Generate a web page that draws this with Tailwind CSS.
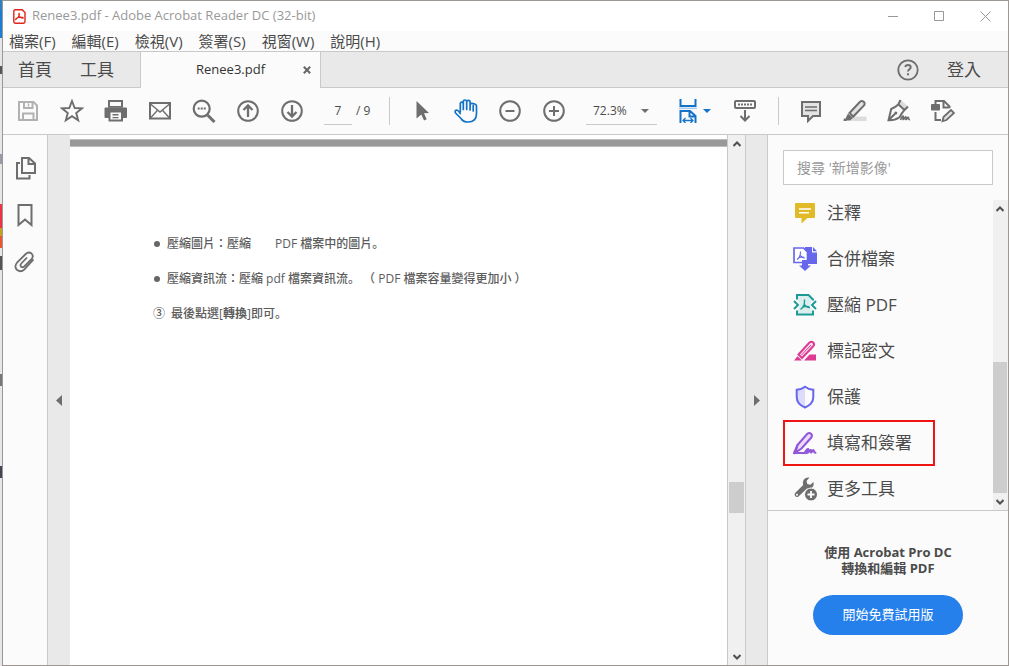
<!DOCTYPE html>
<html lang="zh-Hant">
<head>
<meta charset="utf-8">
<title>Renee3.pdf - Adobe Acrobat Reader DC (32-bit)</title>
<script src="https://cdn.jsdelivr.net/npm/@tailwindcss/browser@4"></script>
</head>
<body class="flex h-screen overflow-hidden bg-[#e6e6e6] font-['Open_Sans','Noto_Sans_CJK_TC',sans-serif] text-[#4b4b4b]">

<!-- desktop showing behind the window -->
<div class="flex w-0.5 shrink-0 flex-col" aria-hidden="true">
  <div class="h-2.5 bg-[#2f7fc4]"></div><div class="h-7 bg-[#1a7fd4]"></div>
  <div class="mt-7 h-2 bg-[#555]"></div>
  <div class="mt-20 h-2.5 bg-[#99a]"></div>
  <div class="mt-10 h-6 bg-[#ee3344]"></div><div class="h-2 bg-[#c8a020]"></div><div class="h-3 bg-[#ee5533]"></div>
  <div class="mt-2 h-3.5 bg-[#555]"></div>
  <div class="mt-26 h-3 bg-[#777]"></div>
  <div class="mt-20 h-3 bg-[#445]"></div>
</div>

<div class="flex min-w-0 flex-1 flex-col border border-[#9d9893] bg-[#fbfbfb]">

  <header>
    <div class="flex h-[30px] items-center bg-white pl-[9px]">
      <svg class="mr-[5px] size-[15px]" viewBox="0 0 15 15" fill="none" stroke="#e1251b"><path d="M3.2.8h7L13 3.6v9.2q0 1.4-1.4 1.4H3.2q-1.4 0-1.4-1.4V2.2Q1.800.8 3.2.8z" stroke-width="1.4"/><path d="M6.900 4.300c1.200 0 0 4-3.100 6.300-.7.500-.2-1.600 3-2.200 3.200-.6 5.200.2 4.200.8-1.200.6-5.100-2.500-4.100-4.900z" stroke-width="1.100"/></svg>
      <h1 class="flex-1 text-[13px] text-[#999]">Renee3.pdf - Adobe Acrobat Reader DC (32-bit)</h1>
      <button aria-label="最小化" class="flex h-full w-[45px] items-center justify-center"><svg class="size-[11px]" viewBox="0 0 11 11" stroke="#999"><path d="M0 5.500h10"/></svg></button>
      <button aria-label="最大化" class="flex h-full w-[46px] items-center justify-center"><svg class="size-[11px]" viewBox="0 0 11 11" fill="none" stroke="#999"><path d="M.5.5h9v9h-9z"/></svg></button>
      <button aria-label="關閉" class="flex h-full w-[46px] items-center justify-center"><svg class="size-[11px]" viewBox="0 0 11 11" stroke="#999"><path d="M.5.5l10 10M10.500.5l-10 10"/></svg></button>
    </div>
    <nav class="flex h-[21px] items-center gap-4 border-b border-[#c9c9c9] pl-1.5 text-[15px] leading-5 whitespace-nowrap">
      <button>檔案(F)</button><button>編輯(E)</button><button>檢視(V)</button><button>簽署(S)</button><button>視窗(W)</button><button>說明(H)</button>
    </nav>
    <div class="flex h-9 text-[17px]">
      <div class="flex w-[138px] gap-7 border-r border-b border-[#c9c9c9] bg-[#e9e9e9] pl-[15px]">
        <button>首頁</button><button>工具</button>
      </div>
      <div class="flex w-[179px] items-center pl-[55px] text-[13px] text-[#333]">
        <span class="flex-1">Renee3.pdf</span>
        <button aria-label="關閉分頁" class="mr-2 flex size-[11px] items-center justify-center"><svg class="size-2" viewBox="0 0 8 8" stroke="#666" stroke-width="2"><path d="M.8.8l6.400 6.400M7.200.8L.8 7.200"/></svg></button>
      </div>
      <div class="flex flex-1 items-center justify-end gap-7 border-b border-l border-[#c9c9c9] bg-[#e9e9e9] pr-[27px]">
        <button aria-label="說明"><svg class="size-[22px]" viewBox="0 0 22 22" fill="none" stroke="#6e6e6e" stroke-width="2"><circle cx="11" cy="11" r="9.700" stroke-width="1.800"/><path d="M8.300 8q.4-2 2.700-2 2.700 0 2.700 2.300c0 2-2.700 1.900-2.700 4.200M11 14.300v2"/></svg></button>
        <button>登入</button>
      </div>
    </div>

    <div class="flex h-[47px] items-center border-b border-[#c9c9c9] pl-[3px] text-xs">
      <button aria-label="儲存" class="flex w-11 justify-center"><svg class="size-6" viewBox="0 0 24 24" fill="none" stroke="#b1b1b1" stroke-width="2"><path d="M3 3h14.500L21 6.500V21H3z"/><path d="M8 3v6h8.500V3M7 21v-6.500h10.500V21"/><path d="M12.500 4.500v3" stroke-width="1.500"/></svg></button>
      <button aria-label="加星號" class="flex w-11 justify-center"><svg class="size-6" viewBox="0 0 24 24" fill="none" stroke="#6e6e6e" stroke-width="1.900"><path d="M12 2l2.700 7 7.300.300-5.800 4.700 2 7.300L12 17.200l-6.200 4.100 2-7.300L2 9.300 9.300 9z"/></svg></button>
      <button aria-label="列印" class="flex w-11 justify-center"><svg class="size-6" viewBox="0 0 24 24" fill="#6e6e6e"><path d="M4 1h15v6H4zM1.500 8.500h20.500q1 0 1 1V18q0 1-1 1h-3v3.500H4.500V19H1.500q-1 0-1-1V9.500q0-1 1-1z"/><path fill="#fbfbfb" d="M6 3h11v4H6zM6.500 13.500h10.500v7H6.500z"/><path d="M8.500 15h6v1.500h-6zM8.500 18h6v1.300h-6zM4 7h15v1.800H4z"/></svg></button>
      <button aria-label="電子郵件" class="flex w-11 justify-center"><svg class="size-6" viewBox="0 0 24 24" fill="none" stroke="#6e6e6e"><path d="M2 4h20v15.500H2z" stroke-width="2"/><path d="M2.500 5l9.500 8 9.500-8M2.500 19l7-7.800M21.500 19l-7-7.800" stroke-width="1.400"/></svg></button>
      <button aria-label="尋找" class="flex w-11 justify-center"><svg class="size-6" viewBox="0 0 24 24" fill="none" stroke="#6e6e6e"><circle cx="9.700" cy="9.700" r="8" stroke-width="2.200"/><path d="M15.500 16l7 7" stroke-width="3"/><path d="M5.700 9.500h8" stroke-width="2" stroke-dasharray="2 1"/></svg></button>
      <button aria-label="上一頁" class="flex w-11 justify-center"><svg class="size-6" viewBox="0 0 24 24" fill="none" stroke="#6e6e6e" stroke-width="2"><circle cx="12" cy="12" r="9.800"/><path d="M12 18V7M7.500 11L12 6.500l4.500 4.500" stroke-width="2.300"/></svg></button>
      <button aria-label="下一頁" class="flex w-11 justify-center"><svg class="size-6" viewBox="0 0 24 24" fill="none" stroke="#6e6e6e" stroke-width="2"><circle cx="12" cy="12" r="9.800"/><path d="M12 6v11M7.500 13l4.500 4.500 4.500-4.500" stroke-width="2.300"/></svg></button>
      <input aria-label="頁碼" value="7" class="ml-2.5 h-7 w-7 border-b border-[#c9c9c9] text-center">
      <span class="ml-1 w-[33px]">/ 9</span>
      <span class="mr-2.5 h-7 w-px bg-[#c9c9c9]"></span>
      <button aria-label="選取" class="flex w-11 justify-center"><svg class="size-6" viewBox="0 0 24 24" fill="#6e6e6e"><path d="M6.500 2l12.500 12-5 .3 2.700 6-2.700 1.200-2.700-6-4.800 4z"/></svg></button>
      <button aria-label="手形工具" class="flex w-11 justify-center"><svg class="size-6" viewBox="0 0 24 24" fill="none" stroke="#1473c8" stroke-width="1.700" stroke-linecap="round" stroke-linejoin="round"><path d="M6.300 12.500V4.700q0-1.600 1.500-1.600t1.500 1.600V10.500 2.700q0-1.700 1.700-1.700t1.700 1.700V10.500 3.100q0-1.700 1.700-1.700T16.100 3.100V11 5.700q0-1.600 3-1.200 3.400.6 3.400 2.500V14.500q0 8.500-8.500 8.500-5 0-7-3.500L1.500 14Q.4 11.300 2.500 11q1.700 0 3.800 3.500"/><path d="M19.200 6V12"/></svg></button>
      <button aria-label="縮小" class="flex w-11 justify-center"><svg class="size-6" viewBox="0 0 24 24" fill="none" stroke="#6e6e6e" stroke-width="2"><circle cx="12" cy="12" r="9.800"/><path d="M7.500 12h9"/></svg></button>
      <button aria-label="放大" class="flex w-11 justify-center"><svg class="size-6" viewBox="0 0 24 24" fill="none" stroke="#6e6e6e" stroke-width="2"><circle cx="12" cy="12" r="9.800"/><path d="M7 12h10M12 7v10"/></svg></button>
      <div class="relative ml-2.5 w-[71px]">
        <select aria-label="縮放比例" class="h-7 w-full appearance-none border-b border-[#c9c9c9] pl-[7px]"><option>72.3%</option></select>
        <svg class="pointer-events-none absolute top-3 right-2 h-1 w-2" viewBox="0 0 8 4" fill="#6e6e6e"><path d="M0 0h8L4 4z"/></svg>
      </div>
      <button aria-label="符合寬度" class="ml-[22px] flex items-center gap-1.5"><svg class="h-6 w-[18px]" viewBox="0 0 18 24" fill="none" stroke="#1473c8" stroke-width="2"><path d="M1.500 0v7h15V0"/><path d="M0 9.300h18" stroke="#a9cdf0" stroke-width="1.500"/><path d="M1.500 24V12h9.500l5.500 5v7M10.500 12v5.500h6"/><path d="M4 21.500h10M6.500 19L4 21.500 6.500 24M11.500 19l2.500 2.500-2.500 2.500" stroke-width="1.300"/></svg><svg class="h-1 w-2" viewBox="0 0 8 4" fill="#1473c8"><path d="M0 0h8L4 4z"/></svg></button>
      <button aria-label="隱藏工具列" class="ml-3 flex w-11 justify-center"><svg class="size-6" viewBox="0 0 24 24" fill="none" stroke="#6e6e6e" stroke-width="2"><rect x="2" y="2" width="20" height="7" rx="1"/><path d="M5 5.500h14" stroke-dasharray="2 1"/><path d="M12 11v10M7.500 17l4.500 4.500 4.500-4.500"/></svg></button>
      <span class="mr-2.5 ml-[11px] h-7 w-px bg-[#c9c9c9]"></span>
      <button aria-label="註解" class="flex w-11 justify-center"><svg class="size-6" viewBox="0 0 24 24" fill="#e3e3e3" stroke="#6e6e6e" stroke-width="2"><path d="M3 3h18v14h-7l-5 5v-5H3z"/><path d="M6 8h12M6 11.500h12" stroke-width="1.400"/></svg></button>
      <button aria-label="螢光標示" class="flex w-11 justify-center"><svg class="size-6" viewBox="0 0 24 24" fill="none" stroke="#6e6e6e" stroke-width="2"><path d="M7 17.500h16.500v4.500H7z" fill="#dcdcdc" stroke="none"/><path d="M6.500 14L17 2.800q1.800-1.600 3.700 0 1.700 1.700.3 3.600L10.300 17.500z" fill="#e3e3e3"/><path d="M5 14.500l5 4.300-3 2.700H1.500z" fill="#6e6e6e" stroke="none"/><path d="M1 19l3 3H.5z" fill="#6e6e6e" stroke="none"/></svg></button>
      <button aria-label="簽署" class="flex w-11 justify-center"><svg class="size-6" viewBox="0 0 24 24" fill="none" stroke="#6e6e6e" stroke-width="2"><path d="M14 1l7 6.500-3.500 2.500-5.500-5z" fill="#dcdcdc" stroke="none"/><path d="M13.500 1L11.300 5.500Q8 8.500 4.200 10L1.500 21.300Q8 21.500 12.500 18.300 14.500 14.500 17.300 11.200L21 7.500M1.500 21.300l6.500-6.500M11 5l7 6.500"/><circle cx="8.800" cy="14" r="1.500" fill="#6e6e6e" stroke="none"/><path d="M13.500 21q2.200-5 2.800-3.700c.4 1-1 3.500.2 3.200s1.600-3 2.400-2.600-.7 3 .3 2.600 1.500-2.700 2.100-2.200-.4 2.500 1.700 2.500" stroke-width="1.600"/></svg></button>
      <button aria-label="編輯 PDF" class="flex w-11 justify-center"><svg class="size-6" viewBox="0 0 24 24" fill="none" stroke="#6e6e6e" stroke-width="2"><path d="M4.500 5V2H13l5.500 5.500V9M12.500 2v6.500h6M4.500 13v8h5.500"/><rect x="0" y="5" width="9" height="6.500" rx="1" fill="#6e6e6e" stroke="none"/><path d="M12.500 18l7.500-7 3 3-7.500 7-4 1.200z" fill="#e3e3e3" stroke-width="1.800"/></svg></button>
    </div>
  </header>

  <div class="flex min-h-0 flex-1">
    <aside class="flex w-[45px] flex-col items-center gap-[23px] border-r border-[#c9c9c9] pt-[21px]">
      <button aria-label="頁面縮圖"><svg class="size-6" viewBox="0 0 24 24" fill="none" stroke="#6e6e6e" stroke-width="2"><path d="M9 2h7l6 5.500V17H9zM15.500 2v6H22"/><path d="M7 7H4v15.500h12.500V19"/></svg></button>
      <button aria-label="書籤"><svg class="size-6" viewBox="0 0 24 24" fill="none" stroke="#6e6e6e" stroke-width="2"><path d="M5.500 2h13v20L12 16.500 5.500 22z"/></svg></button>
      <button aria-label="附件"><svg class="size-6" viewBox="0 0 24 24" fill="none" stroke="#6e6e6e" stroke-width="1.800"><path d="M20.500 9.500l-9 9.800q-3.800 3.500-7.300.7-3.500-3.300-.2-7.300L12.700 4q3-2.700 5.800-.5 2.600 2.800 0 5.700l-7.200 7.300q-1.800 1.400-3.200.2-1.300-1.500.2-3.200L14 7.500"/></svg></button>
    </aside>
    <button aria-label="收合左側窗格" class="flex w-[22px] items-center justify-center bg-[#e9e9e9]"><svg class="h-[11px] w-1.5" viewBox="0 0 6 11" fill="#6e6e6e"><path d="M6 0v11L0 5.500z"/></svg></button>

    <main class="min-w-0 flex-1 bg-white pt-1 text-xs text-[#5c5c5c]">
      <div class="h-2 border-t border-b border-[#bdbdbd] bg-[#999]"></div>
      <div class="flex flex-col gap-[15px] pt-[87px] pl-[84px] font-medium whitespace-pre [text-spacing-trim:space-all]">
        <p class="flex h-5 items-center gap-[7px]"><span class="size-1.5 rounded-full bg-[#666]"></span><span>壓縮圖片：壓縮　　PDF 檔案中的圖片<span lang="ja">。</span></span></p>
        <p class="flex h-5 items-center gap-[7px]"><span class="size-1.5 rounded-full bg-[#666]"></span><span>壓縮資訊流：壓縮 pdf 檔案資訊流<span lang="ja">。</span> （ PDF 檔案容量變得更加小 ）</span></p>
        <p class="-ml-px flex h-5 items-center gap-1.5"><span>③</span><span>最後點選[<b>轉換</b>]即可<span lang="ja">。</span></span></p>
      </div>
    </main>

    <div class="flex w-[19px] flex-col items-center border-x border-[#c9c9c9] bg-[#f0f0f0]">
      <button aria-label="向上捲動" class="flex h-[17px] items-center"><svg class="h-1.5 w-2" viewBox="0 0 8 6" fill="none" stroke="#505050" stroke-width="2"><path d="M.5 5L4 1.500 7.500 5"/></svg></button>
      <div class="flex w-[15px] flex-1 flex-col pb-[135px]"><div class="mt-auto h-[31px] bg-[#cdcdcd]"></div></div>
      <button aria-label="向下捲動" class="flex h-[17px] items-center"><svg class="h-1.5 w-2" viewBox="0 0 8 6" fill="none" stroke="#505050" stroke-width="2"><path d="M.5 1L4 4.500 7.500 1"/></svg></button>
    </div>
    <button aria-label="收合右側窗格" class="flex w-[22px] items-center justify-center border-r border-[#c9c9c9] bg-[#e9e9e9]"><svg class="h-[11px] w-1.5" viewBox="0 0 6 11" fill="#6e6e6e"><path d="M0 0v11l6-5.500z"/></svg></button>

    <aside class="flex w-60 flex-col">
      <div class="flex border-b border-[#c9c9c9]">
        <div class="flex-1 pt-[15px] pb-px pl-[15px]">
          <input type="search" aria-label="搜尋工具" placeholder="搜尋 '新增影像'" class="h-[35px] w-[210px] border border-[#c9c9c9] bg-white px-[13px] text-sm placeholder:text-[#999]">
          <ul class="mt-2 flex flex-col gap-1.5 pl-2.5 text-[17px]">
            <li><button class="flex h-10 items-center gap-2.5"><svg class="size-6" viewBox="0 0 24 24" fill="#e0bb27"><path d="M3 2h18q1 0 1 1v13q0 1-1 1h-6.500L8.500 22.500V17H3q-1 0-1-1V3q0-1 1-1z"/><path d="M6 8h12M6 11.800h10" stroke="#fff" stroke-width="1.500"/></svg>注釋</button></li>
            <li><button class="flex h-10 items-center gap-2.5"><svg class="size-6" viewBox="0 0 24 24" fill="#6767ec"><path d="M12 0h7v5.500h5V17H12z"/><path d="M20 0l4 4.300h-4z"/><path d="M1 1h9.500l4 4v10.500H1z" fill="#fff" stroke="#6767ec" stroke-width="1.700"/><path d="M4 12.500q3.500-1.800 3.500-8M7.500 8.500q1.500 2.700 4.500 2.500M5.500 11q3-1.300 5.500-.8" fill="none" stroke="#6767ec" stroke-width="1.100"/><path d="M9 13h6v5.500h3L12 24l-6-5.500h3z"/></svg>合併檔案</button></li>
            <li><button class="flex h-10 items-center gap-2.5"><svg class="size-6" viewBox="0 0 24 24" fill="none" stroke="#1b9a96" stroke-width="2"><path d="M5 3h10.500l3.500 4-2 5 2 5v3.500H5V17l2-5-2-5z" fill="#dcefee" stroke="none"/><path d="M4 6.500V2h11.500l4.500 4.500v1M4 17.500V21.500h16v-4M1 8l4 4-4 4M23 8l-4 4 4 4"/><path d="M7.500 16.500q4.500-2.700 4-10M11.500 11.500q1.500 3.200 5.500 3M9 14.500q3.500-1.700 7-.8" stroke-width="1.400"/></svg>壓縮 PDF</button></li>
            <li><button class="flex h-10 items-center gap-2.5"><svg class="size-6" viewBox="0 0 24 24" fill="#dd3a93"><path d="M1 21.500l3.500-4.200L9 21.500zM11 21.500l5.500-6H23v6z"/><path d="M5.500 15.500L16.500 3.500q2-1.500 3.700 0 1.700 2 0 3.800L9 19z" fill="#fbe3ef" stroke="#dd3a93" stroke-width="2"/><path d="M8.500 16L18 6" stroke="#dd3a93" stroke-width="1"/></svg>標記密文</button></li>
            <li><button class="flex h-10 items-center gap-2.5"><svg class="size-6" viewBox="0 0 24 24" fill="none"><path d="M12 2v20Q4 18 4 12V5q4.500-.5 8-3z" fill="#dcdcfa"/><path d="M12 1.800Q8.500 4.500 3.700 4.700V12q0 7 8.300 10.500 8.300-3.500 8.300-10.500V4.700Q15.500 4.500 12 1.800z" stroke="#6767ec" stroke-width="2"/></svg>保護</button></li>
            <li class="relative"><span class="absolute -inset-y-[3px] -left-2.5 w-[152px] border-2 border-[#f01414]"></span><button class="flex h-10 items-center gap-2.5"><svg class="size-6" viewBox="0 0 24 24" fill="none" stroke="#9256d9" stroke-width="2"><path d="M4.500 14L14.300 2.800q2-1.600 3.700 0 1.700 1.800.300 3.700L8.500 17.500l-6 4z" fill="#e9ddf7"/><path d="M4.500 14L1 22h10.500q2.500-4.500 3.500-4t-1 4c2.200-.3 2.700-3.500 3.700-3s-.7 3 .5 2.500 1.500-3 2.300-2.300-.2 3 2.800 2.500"/></svg>填寫和簽署</button></li>
            <li><button class="flex h-10 items-center gap-2.5"><svg class="size-6" viewBox="0 0 24 24" fill="#6e6e6e"><path d="M16.500.5L13.500 4l.8 3 3 .8L20.500 5q.8 4-2 6-2 1.200-4.500.5L5.500 19.500q-1.700 1.200-3.200-.2-1.500-1.700-.2-3.300L10.200 8Q9 4 12 1.500q2-1.300 4.500-1z"/><circle cx="4" cy="17.800" r="1" fill="#fff"/><circle cx="18" cy="17.500" r="6.500" stroke="#fbfbfb"/><path d="M18 14v7M14.500 17.500h7" stroke="#fff" stroke-width="1.800"/></svg>更多工具</button></li>
          </ul>
        </div>
        <div class="mt-[65px] flex w-4 flex-col bg-[#f0f0f0] pr-px">
          <button aria-label="工具清單向上" class="flex h-[17px] items-center justify-center"><svg class="h-1.5 w-2" viewBox="0 0 8 6" fill="none" stroke="#505050" stroke-width="2"><path d="M.5 5L4 1.500 7.500 5"/></svg></button>
          <div class="flex flex-1 flex-col"><div class="mt-auto h-[131px] bg-[#cdcdcd]"></div></div>
          <button aria-label="工具清單向下" class="flex h-[17px] items-center justify-center"><svg class="h-1.5 w-2" viewBox="0 0 8 6" fill="none" stroke="#505050" stroke-width="2"><path d="M.5 1L4 4.500 7.500 1"/></svg></button>
        </div>
      </div>
      <div class="flex flex-col items-center pt-[33px] text-[13px]">
        <p class="text-center leading-4 font-bold">使用 Acrobat Pro DC<br>轉換和編輯 PDF</p>
        <button class="mt-[19px] h-10 w-[150px] rounded-full bg-[#2680eb] text-white">開始免費試用版</button>
      </div>
    </aside>
  </div>
</div>
</body>
</html>
